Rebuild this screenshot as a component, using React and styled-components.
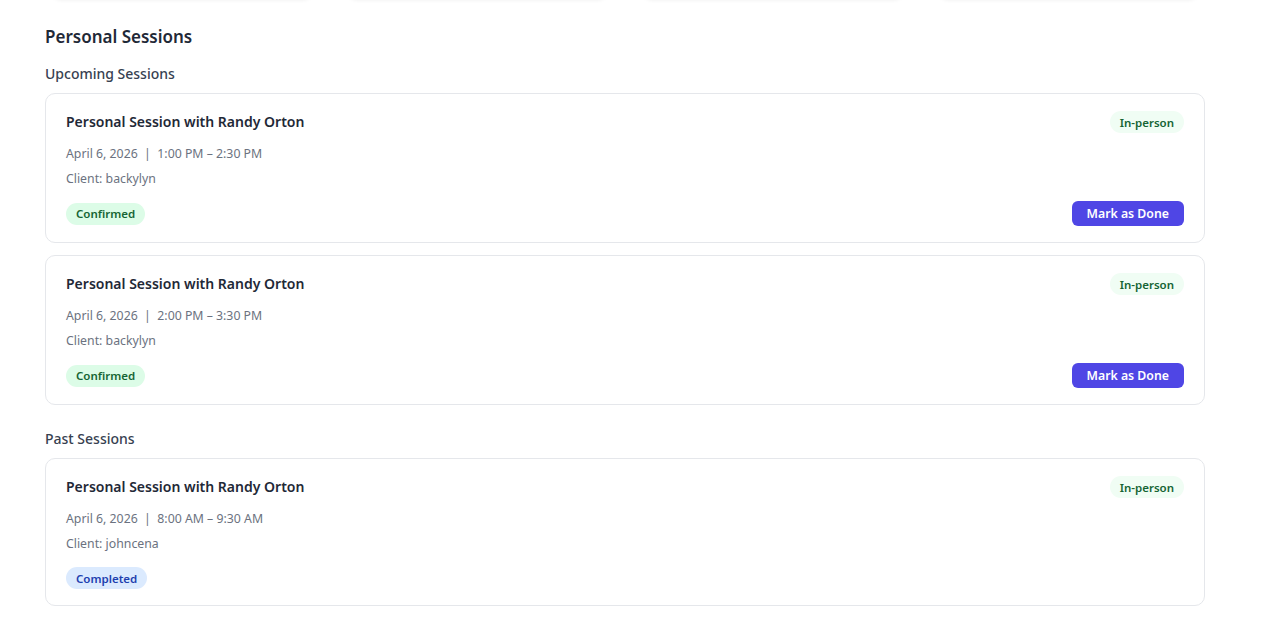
import React from "react";
import styled, {createGlobalStyle} from "styled-components";

const GlobalStyle = createGlobalStyle`
    html, body {
        margin: 0;
        padding: 0;
        background: #ffffff;
    }

    body {
        font-family: "Noto Sans", "Open Sans", sans-serif;
        color: #1f2937;
    }
`;

const upcoming = [
    {id: 1, title: "Personal Session with Randy Orton", date: "April 6, 2026", time: "1:00 PM – 2:30 PM", client: "backylyn", status: "Confirmed", mode: "In-person"},
    {id: 2, title: "Personal Session with Randy Orton", date: "April 6, 2026", time: "2:00 PM – 3:30 PM", client: "backylyn", status: "Confirmed", mode: "In-person"},
];

const past = [
    {id: 3, title: "Personal Session with Randy Orton", date: "April 6, 2026", time: "8:00 AM – 9:30 AM", client: "johncena", status: "Completed", mode: "In-person"},
];

function SessionCard({session, done}) {
    return (
        <Card>
            <CardHeader>
                <CardTitle>{session.title}</CardTitle>
                <Badge $variant="mode">{session.mode}</Badge>
            </CardHeader>
            <Meta>{session.date}&nbsp; | &nbsp;{session.time}</Meta>
            <Client>Client: {session.client}</Client>
            <CardFooter $withAction={!done}>
                <Badge $variant={done ? "completed" : "confirmed"}>{session.status}</Badge>
                {!done && <DoneButton type="button">Mark as Done</DoneButton>}
            </CardFooter>
        </Card>
    );
}

export default function App() {
    return (
        <Page>
            <GlobalStyle/>
            <StatsRow>
                <StatCard/>
                <StatCard/>
                <StatCard/>
                <StatCard/>
            </StatsRow>
            <Heading>Personal Sessions</Heading>
            <SubHeading>Upcoming Sessions</SubHeading>
            <CardList>
                {upcoming.map((s) => <SessionCard key={s.id} session={s}/>)}
            </CardList>
            <SubHeading $spaced>Past Sessions</SubHeading>
            <CardList>
                {past.map((s) => <SessionCard key={s.id} session={s} done/>)}
            </CardList>
        </Page>
    );
}

const Page = styled.div`
    width: 1160px;
    padding: 0 0 30px 45px;
    overflow: hidden;
`;

const StatsRow = styled.div`
    display: grid;
    grid-template-columns: repeat(4, 1fr);
    gap: 34px;
    margin-top: -89px;
    height: 88px;
    padding: 0 6px;
`;

const StatCard = styled.div`
    background: #ffffff;
    border-radius: 10px;
    box-shadow: 0 1px 4px rgba(0, 0, 0, 0.07);
`;

const Heading = styled.h2`
    margin: 26px 0 0;
    font-size: 17px;
    line-height: 24px;
    font-weight: 600;
    color: #1f2937;
`;

const SubHeading = styled.h3`
    margin: ${(p) => (p.$spaced ? "24px" : "15px")} 0 9px;
    font-size: 14px;
    line-height: 20px;
    font-weight: 500;
    color: #374151;
`;

const CardList = styled.div`
    display: flex;
    flex-direction: column;
    gap: 12px;
`;

const Card = styled.div`
    border: 1px solid #e5e7eb;
    border-radius: 10px;
    background: #ffffff;
    padding: 17px 20px 16px;
`;

const CardHeader = styled.div`
    display: flex;
    align-items: center;
    justify-content: space-between;
    height: 22px;
`;

const CardTitle = styled.div`
    font-size: 14px;
    line-height: 18px;
    font-weight: 600;
    color: #1f2937;
`;

const Meta = styled.div`
    margin-top: 12px;
    font-size: 12.3px;
    line-height: 18px;
    color: #6b7280;
`;

const Client = styled(Meta)`
    margin-top: 7px;
`;

const CardFooter = styled.div`
    display: flex;
    align-items: center;
    justify-content: space-between;
    margin-top: ${(p) => (p.$withAction ? "13px" : "14px")};
`;

const badgeColors = {
    mode: {bg: "#f0fdf4", fg: "#166534"},
    confirmed: {bg: "#dcfce7", fg: "#166534"},
    completed: {bg: "#dbeafe", fg: "#1e40af"},
};

const Badge = styled.span`
    display: inline-flex;
    align-items: center;
    height: 22px;
    padding: 0 10px;
    border-radius: 11px;
    font-size: 11.5px;
    font-weight: 600;
    background: ${(p) => badgeColors[p.$variant].bg};
    color: ${(p) => badgeColors[p.$variant].fg};
`;

const DoneButton = styled.button`
    height: 25px;
    padding: 0 15px;
    border: none;
    border-radius: 6px;
    background: #4f46e5;
    color: #ffffff;
    font-family: inherit;
    font-size: 12.3px;
    font-weight: 600;
    cursor: pointer;
`;
